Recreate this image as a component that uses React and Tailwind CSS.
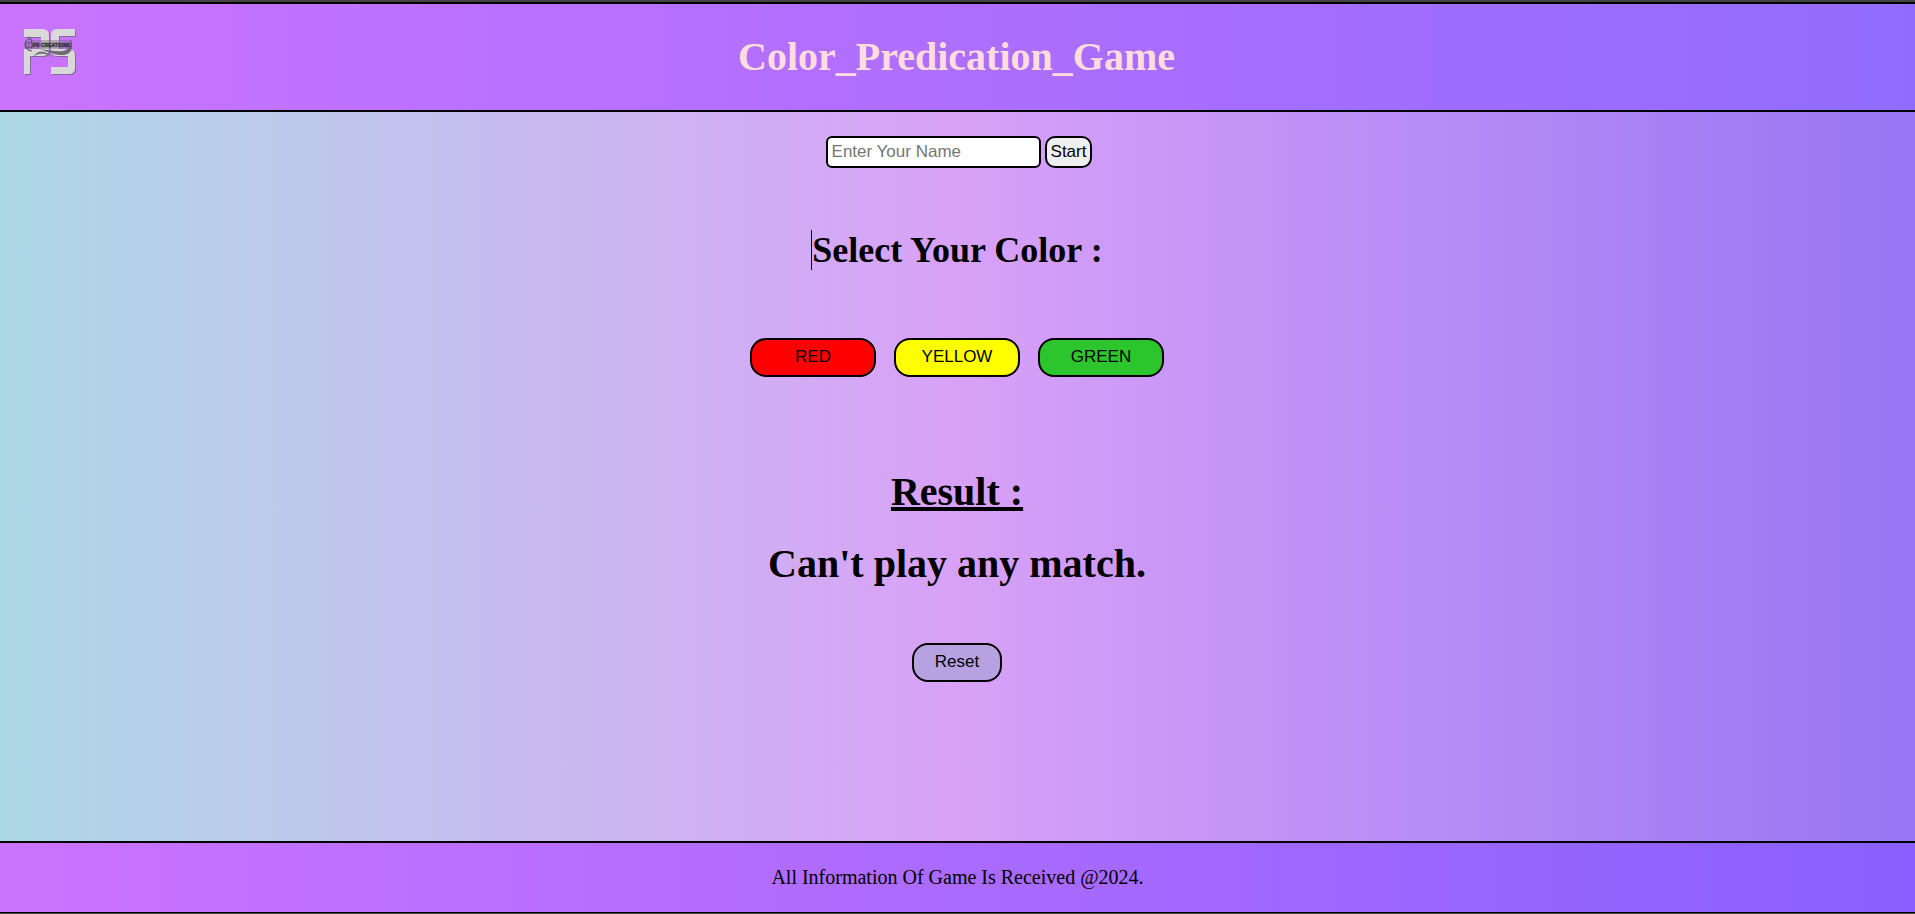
import { useState } from "react";

const COLORS = [
  { label: "RED", className: "bg-[#ff0000]" },
  { label: "YELLOW", className: "bg-[#ffff00]" },
  { label: "GREEN", className: "bg-[#2dc52d]" },
];

function Letters() {
  return (
    <>
      <path d="M0 0H18Q25 0 25 6V20Q25 27 19 27H6V45H0V20H17V8H0Z" />
      <path d="M51 0V7H35V20H45Q51 20 51 26V39Q51 45 45 45H27V38H44V27H33Q27 27 27 20V6Q27 0 33 0Z" />
    </>
  );
}

function Logo() {
  return (
    <svg viewBox="0 -1 54 48" className="h-12 w-[54px]" role="img" aria-label="PS Creations">
      <g transform="translate(1 1)" fill="#7d6b98">
        <Letters />
      </g>
      <g fill="#d9d9d9">
        <Letters />
      </g>
      <path d="M8 11H46V20H8Z" fill="#77727e" opacity="0.45" />
      <path d="M16 20C25 21 36 24 42 21Q47 18 47 12Q50 20 45 24C38 29 27 24 16 20Z" fill="#706c76" />
      <path d="M9 28C13 21 21 20 30 29C22 24 15 23 9 28Z" fill="#77737d" />
      <g fill="none" stroke="#5f5a66" strokeWidth="1.2">
        <path d="M6 10Q1 11 1 15Q1 21 8 22M4 8Q7 9 8 12" />
        <circle cx="5" cy="16" r="3" />
        <path d="M5 13V19M7 12Q10 16 7 20" />
        <path d="M46 11Q49 15 46 20" />
      </g>
      <text x="9" y="18" fill="#35323a" stroke="#35323a" strokeWidth="0.4" fontFamily="Liberation Sans, sans-serif" fontWeight="bold" fontSize="5">
        PS CREATIONS
      </text>
    </svg>
  );
}

export default function App() {
  const [name, setName] = useState("");
  return (
    <div className="flex min-h-screen flex-col bg-linear-to-r from-[#add8e6] via-[#d8a1f7] to-[#9775f3] font-['Liberation_Serif',serif] text-black">
      <div className="h-[2px] bg-[#444444]" />
      <header className="grid grid-cols-[1fr_auto_1fr] items-start border-y-2 border-black bg-linear-to-r from-[#c974ff] via-[#ae6eff] to-[#916cfc] py-6 pr-[26px] pl-6">
        <Logo />
        <h1 className="text-[40px] leading-[58px] font-bold text-[#ffdddd]">Color_Predication_Game</h1>
      </header>

      <main className="flex flex-1 flex-col items-center pt-6 pr-px">
        <form className="flex gap-1 pl-1" onSubmit={(e) => e.preventDefault()}>
          <input
            type="text"
            aria-label="Enter Your Name"
            placeholder="Enter Your Name"
            value={name}
            onChange={(e) => setName(e.target.value)}
            className="h-8 w-[215px] rounded-[6px] border-2 border-black bg-white px-1 font-['Liberation_Sans',sans-serif] text-[17px] placeholder:text-[#757575]"
          />
          <button type="submit" className="h-8 rounded-[10px] border-2 border-black bg-[#efefef] px-1 font-['Liberation_Sans',sans-serif] text-[17px]">
            Start
          </button>
        </form>

        <h2 className="mt-[62px] border-l border-black text-[36px] leading-[40px] font-bold">Select Your Color :</h2>

        <div className="mt-[68px] flex gap-[18px]">
          {COLORS.map((c) => (
            <button
              key={c.label}
              type="button"
              className={`h-[39px] w-[126px] rounded-2xl border-2 border-black pb-0.5 font-['Liberation_Sans',sans-serif] text-[17px] ${c.className}`}
            >
              {c.label}
            </button>
          ))}
        </div>

        <h2 className="mt-[92px] text-[40px] leading-[46px] font-bold underline">Result :</h2>
        <p className="mt-[26px] text-[40px] leading-[46px] font-bold">Can't play any match.</p>

        <button type="button" className="mt-[56px] h-[39px] w-[90px] rounded-2xl border-2 border-black bg-[#b7a1e1] pb-0.5 font-['Liberation_Sans',sans-serif] text-[17px]">
          Reset
        </button>
      </main>

      <footer className="border-t-2 border-b border-black bg-linear-to-r from-[#cb73ff] via-[#ab6aff] to-[#8960ff] py-6 text-center text-[20px] leading-[21px]">
        All Information Of Game Is Received @2024.
      </footer>
      <div className="h-px bg-[#444444]" />
    </div>
  );
}
